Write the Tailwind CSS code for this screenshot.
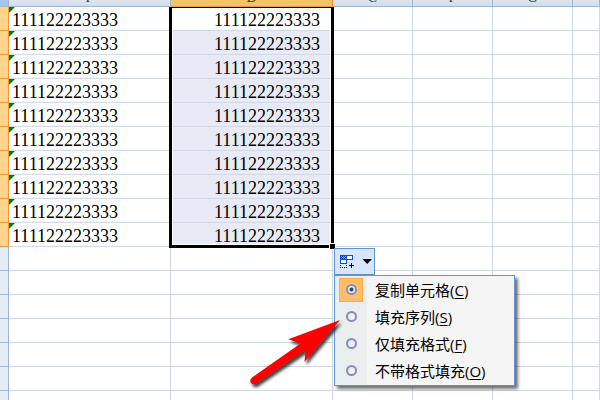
<!DOCTYPE html>
<html lang="zh-CN">
<head>
    <meta charset="UTF-8">
    <meta name="viewport" content="width=device-width, initial-scale=1.0">
    <title>Excel 自动填充选项</title>
    <script src="https://cdn.jsdelivr.net/npm/@tailwindcss/browser@4"></script>
</head>
<body class="bg-white h-screen overflow-hidden">
    <main class="relative h-full overflow-hidden">
        <table class="w-full table-fixed border-separate border-spacing-0 font-['Liberation_Serif','Noto_Sans_CJK_SC',serif] text-lg text-black">
            <colgroup>
                <col class="w-[9px]">
                <col class="w-[162px]">
                <col class="w-[162px]">
                <col class="w-20">
                <col class="w-20">
                <col class="w-20">
                <col>
            </colgroup>
            <thead>
                <tr id="columnHeaders" class="text-sm leading-[14px] text-[#27413e]"></tr>
            </thead>
            <tbody id="sheetRows"></tbody>
        </table>

        <!-- Arrow pointing at the fill series option -->
        <svg class="absolute z-20 left-[240px] top-[310px] pointer-events-none" width="110" height="90" viewBox="0 0 110 90" aria-hidden="true">
            <defs>
                <filter id="arrowShadow" x="-20%" y="-20%" width="140%" height="150%">
                    <feDropShadow dx="2" dy="3" stdDeviation="1.5" flood-color="#000" flood-opacity="0.75" />
                </filter>
            </defs>
            <path filter="url(#arrowShadow)" fill="#ff0000" d="M100 10 L48.300 29.300 L60.500 33.500 L12 67.500 Q9 70.500 11 73 Q13.500 75.500 17 73 L65.500 40 L64.500 52 Z" />
        </svg>
    </main>

    <template id="selectionTemplate">
        <div class="absolute z-10 top-0 -left-0.5 -right-0.5 h-[241px] border-x-3 border-b-3 border-t border-black shadow-[inset_0_0_0_1px_white]">
            <span class="absolute -right-1 -bottom-1 size-[5px] bg-black outline outline-white"></span>
            <div class="absolute left-[162px] top-[240px] font-['Open_Sans','Noto_Sans_CJK_SC',sans-serif] text-[15px] text-black">
                <button type="button" id="fillButton" aria-label="自动填充选项" class="flex items-center justify-between w-[41px] h-[27px] pl-[5px] border border-[#6593cf] bg-[#d5e6fd]">
                    <svg width="15" height="15" viewBox="0 0 15 15" aria-hidden="true" shape-rendering="crispEdges">
                        <path fill="#0b50d0" d="M0 1h13v5H7v4H0z" />
                        <path fill="#fff" d="M7 2h5v3H7zM1 6h5v3H1z" />
                        <path fill="#5b9dfa" d="M1 2h1v1H1zM3 2h1v1H3zM5 2h1v1H5zM2 3h1v1H2zM4 3h1v1H4zM1 4h1v1H1zM3 4h1v1H3zM5 4h1v1H5z" />
                        <path fill="#000" d="M0 11h1v1H0zM0 13h1v1H0zM2 13h1v1H2zM4 13h1v1H4zM6 13h1v1H6zM6 11h1v1H6zM9 11h5v1H9zM11 9h1v5h-1z" />
                    </svg>
                    <svg width="13" height="7" viewBox="0 0 13 7" aria-hidden="true">
                        <path fill="#000" d="M1.500 1h9.500L6.200 6z" />
                    </svg>
                </button>
                <fieldset id="fillMenu" class="w-[181px] pb-px border border-[#6593cf] bg-linear-to-r from-[#e9eeee] from-[32px] to-[#f5f5f5] to-[32px] shadow-[3px_3px_3px_rgba(0,0,0,0.55)]"></fieldset>
            </div>
        </div>
    </template>

    <script>
        const columns = ['F', 'D', 'C', 'F', 'G', ''];
        const fillOptions = [
            { label: '复制单元格', key: 'C' },
            { label: '填充序列', key: 'S' },
            { label: '仅填充格式', key: 'F' },
            { label: '不带格式填充', key: 'O' }
        ];
        const cellValue = '111122223333';
        const filledRows = 10;
        const totalRows = 17;

        // Column headers
        const columnHeaders = document.getElementById('columnHeaders');
        columnHeaders.innerHTML = '<th class="h-[7px] p-0 bg-[#a9c4e9] border-r border-b border-[#9eb6ce]"></th>';
        columns.forEach((name, index) => {
            const th = document.createElement('th');
            th.className = index === 1
                ? 'h-[7px] p-0 font-normal bg-[#f2c568] border-r border-b border-[#f29536]'
                : 'h-[7px] p-0 font-normal bg-linear-to-b from-[#dfe5ef] to-[#d4dcea] border-r border-b border-[#9eb6ce]';
            th.innerHTML = `<div class="flex items-end justify-center h-1.5 pb-px overflow-hidden">${name}</div>`;
            columnHeaders.appendChild(th);
        });

        // Sheet rows
        const sheetRows = document.getElementById('sheetRows');
        for (let row = 0; row < totalRows; row++) {
            const filled = row < filledRows;
            const tr = document.createElement('tr');

            const rowHeader = document.createElement('th');
            rowHeader.className = filled
                ? 'h-6 p-0 bg-[#ffd58d] border-r border-b border-[#f29536]'
                : 'h-6 p-0 bg-[#e4ecf7] border-r border-b border-[#9eb6ce]';
            tr.appendChild(rowHeader);

            columns.forEach((name, index) => {
                const td = document.createElement('td');
                td.className = 'relative h-6 p-0 leading-[23px] border-r border-b border-[#d0d7e5]';
                if (filled && index === 0) {
                    td.classList.add('pl-[3px]');
                    td.innerHTML = `<span class="absolute left-0 top-0 size-1.5 bg-[#008000] [clip-path:polygon(0_0,100%_0,0_100%)]"></span><div class="pt-1 leading-[19px]">${cellValue}</div>`;
                }
                if (filled && index === 1) {
                    td.classList.add('pr-3', 'text-right');
                    if (row > 0) td.classList.add('bg-[#e8ebf5]');
                    td.innerHTML = `<div class="pt-1 leading-[19px]">${cellValue}</div>`;
                }
                tr.appendChild(td);
            });
            sheetRows.appendChild(tr);
        }

        // Selection frame with the fill options menu
        const firstSelected = sheetRows.rows[0].cells[2];
        firstSelected.appendChild(document.getElementById('selectionTemplate').content.cloneNode(true));

        const fillMenu = document.getElementById('fillMenu');
        fillOptions.forEach((option, index) => {
            const label = document.createElement('label');
            label.className = 'group flex items-center h-[27px] pl-1 gap-3 text-left whitespace-nowrap';
            label.innerHTML = `
                <span class="flex items-center justify-center size-6 border border-transparent group-has-checked:bg-[#ffbd69] group-has-checked:border-[#ffab3f]">
                    <input type="radio" name="fill" value="${option.key}" class="appearance-none size-[11px] rounded-full border-2 border-[#8290b4] bg-linear-to-br from-[#dfe1ee] to-white checked:bg-radial checked:from-[#33456b] checked:from-30% checked:to-[#eef1f8] checked:to-50%" ${index === 0 ? 'checked' : ''}>
                </span>
                <span class="pt-0.5 leading-[25px]">${option.label}(<u class="underline-offset-2">${option.key}</u>)</span>`;
            fillMenu.appendChild(label);
        });

        document.getElementById('fillButton').onclick = function () {
            fillMenu.classList.toggle('hidden');
        };
    </script>
</body>
</html>
